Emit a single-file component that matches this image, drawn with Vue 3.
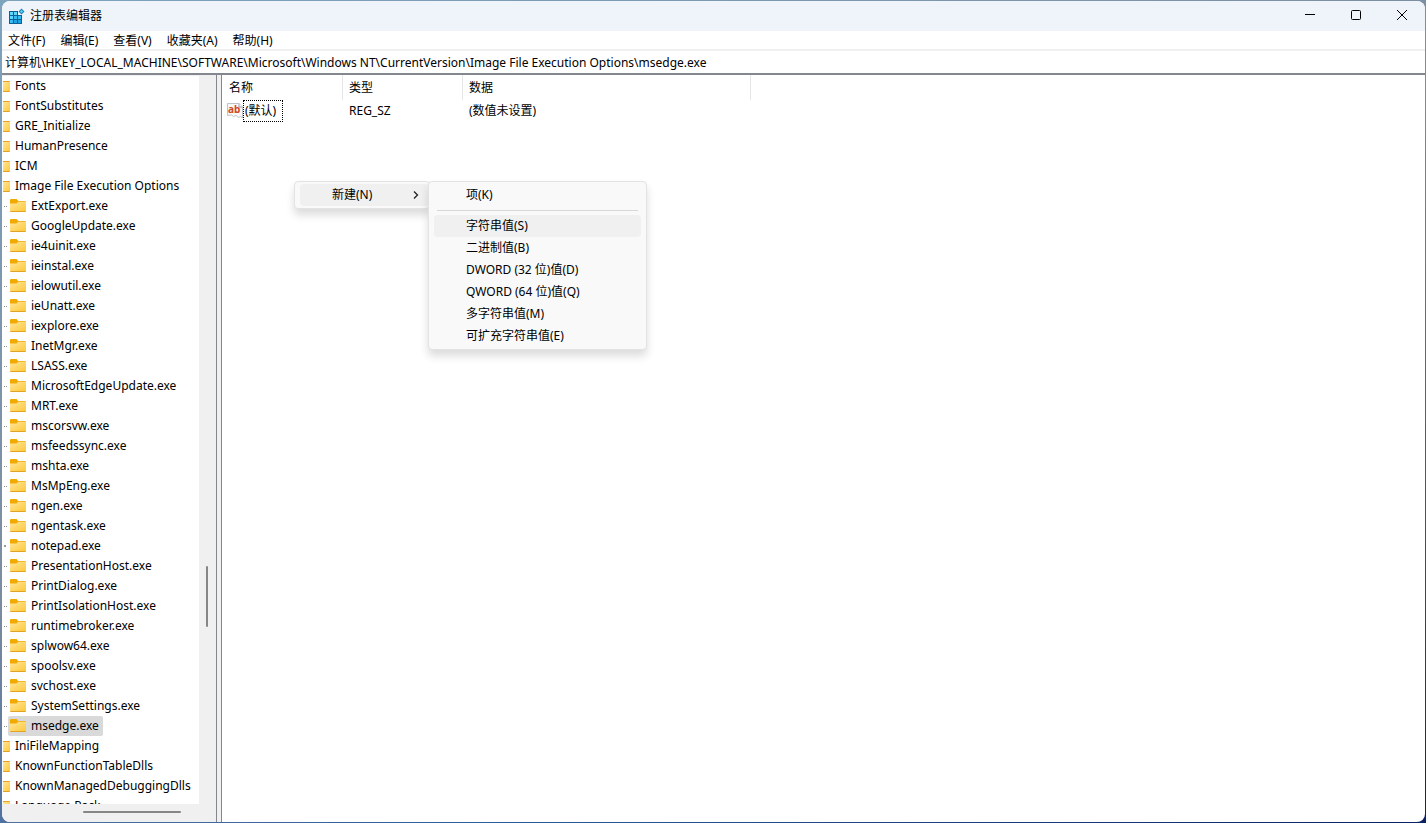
<script setup>
import { ref } from 'vue'

const menus = ['文件(F)', '编辑(E)', '查看(V)', '收藏夹(A)', '帮助(H)']
const address = ref('计算机\\HKEY_LOCAL_MACHINE\\SOFTWARE\\Microsoft\\Windows NT\\CurrentVersion\\Image File Execution Options\\msedge.exe')
const selected = ref('msedge.exe')

const before = ['Fonts', 'FontSubstitutes', 'GRE_Initialize', 'HumanPresence', 'ICM', 'Image File Execution Options']
const children = [
  'ExtExport.exe', 'GoogleUpdate.exe', 'ie4uinit.exe', 'ieinstal.exe', 'ielowutil.exe', 'ieUnatt.exe',
  'iexplore.exe', 'InetMgr.exe', 'LSASS.exe', 'MicrosoftEdgeUpdate.exe', 'MRT.exe', 'mscorsvw.exe',
  'msfeedssync.exe', 'mshta.exe', 'MsMpEng.exe', 'ngen.exe', 'ngentask.exe', 'notepad.exe',
  'PresentationHost.exe', 'PrintDialog.exe', 'PrintIsolationHost.exe', 'runtimebroker.exe',
  'splwow64.exe', 'spoolsv.exe', 'svchost.exe', 'SystemSettings.exe', 'msedge.exe'
]
const after = ['IniFileMapping', 'KnownFunctionTableDlls', 'KnownManagedDebuggingDlls', 'Language Pack']
const rows = [
  ...before.map((name) => ({ name, child: false })),
  ...children.map((name) => ({ name, child: true })),
  ...after.map((name) => ({ name, child: false }))
]

const newItems = ['字符串值(S)', '二进制值(B)', 'DWORD (32 位)值(D)', 'QWORD (64 位)值(Q)', '多字符串值(M)', '可扩充字符串值(E)']
</script>

<template>
  <div class="desktop">
    <div class="window">
      <header class="titlebar">
        <svg class="app-icon" width="17" height="17" viewBox="0 0 17 17" aria-hidden="true">
          <path d="M1 3h9v4h4v9H1z" fill="#0b6296" />
          <path d="M2 4h3v3H2zM6 4h3v3H6zM2 8h3v3H2z" fill="#5fd6ff" />
          <path d="M6 8h3v3H6zM10 8h3v3h-3zM2 12h3v3H2z" fill="#35bdf5" />
          <path d="M6 12h3v3H6zM10 12h3v3h-3z" fill="#1ba3e4" />
          <path d="M13.500 .5l3 3-3 3-3-3z" fill="#1f84b8" />
          <path d="M13.500 2l1.500 1.500L13.500 5 12 3.500z" fill="#63d4f8" />
        </svg>
        <span class="title">注册表编辑器</span>
        <div class="controls">
          <button type="button" aria-label="最小化">
            <svg width="12" height="12" viewBox="0 0 12 12"><path d="M1 5.500h10" /></svg>
          </button>
          <button type="button" aria-label="最大化">
            <svg width="12" height="12" viewBox="0 0 12 12"><rect x="1.500" y="1.500" width="9" height="9" rx="1" /></svg>
          </button>
          <button type="button" aria-label="关闭">
            <svg width="12" height="12" viewBox="0 0 12 12"><path d="M1 1l10 10M11 1L1 11" /></svg>
          </button>
        </div>
      </header>

      <nav class="menubar" aria-label="菜单栏">
        <button v-for="m in menus" :key="m" type="button">{{ m }}</button>
      </nav>

      <input v-model="address" class="address" type="text" aria-label="地址" spellcheck="false" />

      <main class="body">
        <aside class="tree-pane">
          <div class="tree-row">
            <div class="tree" role="tree" aria-label="注册表项">
              <div
                v-for="r in rows"
                :key="r.name"
                class="node"
                :class="{ child: r.child }"
                role="treeitem"
                :aria-selected="selected === r.name"
              >
                <span v-if="r.child" class="lead" :class="{ arrow: r.name === 'notepad.exe' }"></span>
                <button type="button" class="key" :class="{ on: selected === r.name }" @click="selected = r.name">
                  <svg v-if="r.child" class="folder" width="16" height="14" viewBox="0 0 16 14" aria-hidden="true">
                    <path d="M0 1Q0 0 1 0h5.500L8 1.500V5H0z" fill="#f2a900" />
                    <path d="M8 2h7q1 0 1 1v1H7z" fill="#efb62e" />
                    <path d="M0 4.500h6.500L8 3h8v9H0z" fill="url(#sheet)" />
                    <path d="M0 12h16q0 1-1 1H1q-1 0-1-1z" fill="#e5a220" />
                  </svg>
                  <svg v-else class="folder-edge" width="7" height="14" viewBox="0 0 7 14" aria-hidden="true">
                    <path d="M0 3h7v9H0z" fill="url(#sheet)" />
                    <path d="M0 2h6q1 0 1 1H0zM0 12h7q0 1-1 1H0z" fill="#e5a220" />
                  </svg>
                  <span>{{ r.name }}</span>
                </button>
              </div>
            </div>
            <div class="vscroll"><div class="vthumb"></div></div>
          </div>
          <div class="hscroll"><div class="hthumb"></div></div>
        </aside>

        <div class="splitter"></div>

        <section class="list">
          <table>
            <thead>
              <tr><th class="c-name">名称</th><th class="c-type">类型</th><th class="c-data">数据</th></tr>
            </thead>
            <tbody>
              <tr>
                <td>
                  <div class="value">
                    <svg width="16" height="16" viewBox="0 0 16 16" aria-hidden="true">
                      <path d="M.5 .5h11.500l3.500 3.500v11l-2-1.500-2 1-2.500-2-2.500 1-2-1.500-4 .5z" fill="#f8f8f9" stroke="#bfc2c6" />
                      <path d="M12 .5V4h3.500" fill="#fff" stroke="#9da1a6" />
                      <text x="1" y="10" class="ab">ab</text>
                    </svg>
                    <span class="focus">(默认)</span>
                  </div>
                </td>
                <td>REG_SZ</td>
                <td>(数值未设置)</td>
              </tr>
            </tbody>
          </table>
        </section>
      </main>
    </div>

    <div class="context" role="menu">
      <button type="button" class="item parent" role="menuitem" aria-haspopup="true">
        <span>新建(N)</span>
        <svg width="6" height="10" viewBox="0 0 6 10" aria-hidden="true"><path d="M1 1.500L4.500 5 1 8.500" /></svg>
      </button>
      <div class="submenu" role="menu">
        <button type="button" class="item" role="menuitem">项(K)</button>
        <hr />
        <button
          v-for="(n, i) in newItems"
          :key="n"
          type="button"
          class="item"
          :class="{ hot: i === 0 }"
          role="menuitem"
        >{{ n }}</button>
      </div>
    </div>

    <svg class="defs" width="0" height="0" aria-hidden="true">
      <defs>
        <linearGradient id="sheet" x1="0" y1="0" x2="1" y2="1">
          <stop offset="0" stop-color="#ffe69a" />
          <stop offset="1" stop-color="#fdc93c" />
        </linearGradient>
      </defs>
    </svg>
  </div>
</template>

<style>
html,
body,
#app {
  height: 100%;
}
body {
  margin: 0;
  overflow: hidden;
}
</style>

<style scoped>
.desktop {
  position: relative;
  box-sizing: border-box;
  height: 100%;
  padding: 1px 1px 1px 2px;
  background: linear-gradient(160deg, #7da3bd 0%, #7c8ca0 45%, #2b5ba0 75%, #0a2166 100%);
  font-family: "Noto Sans", "Noto Sans CJK SC", sans-serif;
  font-size: 12px;
  line-height: 20px;
  color: #000;
}
button {
  margin: 0;
  padding: 0;
  border: 0;
  background: none;
  color: inherit;
  font: inherit;
  white-space: nowrap;
}
.window {
  display: flex;
  flex-direction: column;
  height: 100%;
  overflow: hidden;
  border-radius: 8px;
  background: #fff;
}
.titlebar {
  display: flex;
  align-items: center;
  flex: none;
  height: 30px;
  padding-left: 6px;
  background: #eff4fa;
}
.title {
  flex: 1;
  padding-left: 5px;
}
.controls {
  display: flex;
  height: 100%;
}
.controls button {
  display: flex;
  align-items: center;
  justify-content: center;
  width: 46px;
  height: 28px;
}
.controls svg {
  fill: none;
  stroke: #000;
}
.menubar {
  display: flex;
  flex: none;
  gap: 15px;
  height: 18px;
  padding-left: 6px;
  border-bottom: 2px solid #f0f0f0;
}
.address {
  flex: none;
  box-sizing: border-box;
  width: 100%;
  height: 24px;
  padding: 0 3px;
  border: 0;
  border-bottom: 2px solid #828790;
  outline: 0;
  color: #000;
  font: inherit;
}
.body {
  display: flex;
  flex: 1;
  min-height: 0;
}
.tree-pane {
  display: flex;
  flex-direction: column;
  flex: none;
  width: 214px;
  padding-top: 1px;
  background: #f0f0f0;
}
.tree-row {
  display: flex;
  flex: 1;
  min-height: 0;
}
.tree {
  flex: 1;
  min-width: 0;
  overflow: hidden;
  background: #fff;
}
.node {
  display: flex;
  height: 20px;
  padding-left: 1px;
}
.node.child {
  padding-left: 2px;
}
.lead {
  flex: none;
  width: 4px;
  height: 1px;
  margin-top: 10px;
  background: repeating-linear-gradient(90deg, #8c8c8c 0 1px, transparent 1px 2px);
}
.arrow {
  height: 3px;
  margin-top: 9px;
  background: radial-gradient(circle at 1px 1px, #999 1px, transparent 1px);
}
.key {
  display: flex;
  align-items: center;
  gap: 5px;
  height: 20px;
}
.child .key {
  padding: 0 4px 0 2px;
}
.key.on {
  border-radius: 2px;
  background: #d9d9d9;
}
.vscroll {
  box-sizing: border-box;
  flex: none;
  width: 17px;
  padding-left: 7px;
  background: #f0f0f0;
}
.vthumb {
  width: 2px;
  height: 61px;
  margin-top: 490px;
  border-radius: 1px;
  background: #868686;
}
.hscroll {
  flex: none;
  height: 18px;
}
.hthumb {
  width: 98px;
  height: 2px;
  margin: 7px 0 0 81px;
  border-radius: 1px;
  background: #868686;
}
.splitter {
  flex: none;
  width: 4px;
  border: solid #828790;
  border-width: 0 1px;
  background: #f0f0f0;
}
.list {
  flex: 1;
  min-width: 0;
  overflow: hidden;
}
table {
  border-collapse: separate;
  border-spacing: 0;
  table-layout: fixed;
  width: 529px;
}
th {
  box-sizing: border-box;
  height: 25px;
  padding: 0 0 0 6px;
  border-right: 1px solid #e5e5e5;
  font-weight: 400;
  text-align: left;
}
th:first-child {
  padding-left: 7px;
}
.c-name {
  width: 121px;
}
.c-type {
  width: 120px;
}
td {
  height: 22px;
  padding: 0 0 0 6px;
}
.value {
  display: flex;
  align-items: center;
  margin-left: -1px;
}
.focus {
  box-sizing: border-box;
  height: 22px;
  width: 40px;
  padding-left: 1px;
  border: 1px dotted #000;
}
.ab {
  fill: #d4461f;
  font: bold 10px "Noto Sans", sans-serif;
}
.context {
  position: absolute;
  top: 181px;
  left: 294px;
  box-sizing: border-box;
  width: 136px;
  height: 28px;
  padding: 2px 0 2px 5px;
  border: 1px solid #e3e3e3;
  border-radius: 4px;
  background: #f9f9f9;
  box-shadow: 0 6px 9px rgba(0, 0, 0, 0.14);
}
.item {
  display: flex;
  align-items: center;
  width: 100%;
  height: 22px;
  padding-left: 32px;
  border-radius: 4px;
}
.parent {
  justify-content: space-between;
  padding-right: 10px;
  background: #f0f0f0;
}
.parent svg {
  fill: none;
  stroke: #222;
  stroke-width: 1.300;
}
.submenu {
  position: absolute;
  top: -1px;
  left: 133px;
  box-sizing: border-box;
  width: 219px;
  padding: 2px 5px;
  border: 1px solid #e3e3e3;
  border-radius: 4px;
  background: #f9f9f9;
  box-shadow: 0 6px 9px rgba(0, 0, 0, 0.14);
}
.submenu hr {
  height: 1px;
  margin: 4px 3px;
  border: 0;
  background: #d7d7d7;
}
.hot {
  background: #f0f0f0;
}
.defs {
  position: absolute;
}
</style>
